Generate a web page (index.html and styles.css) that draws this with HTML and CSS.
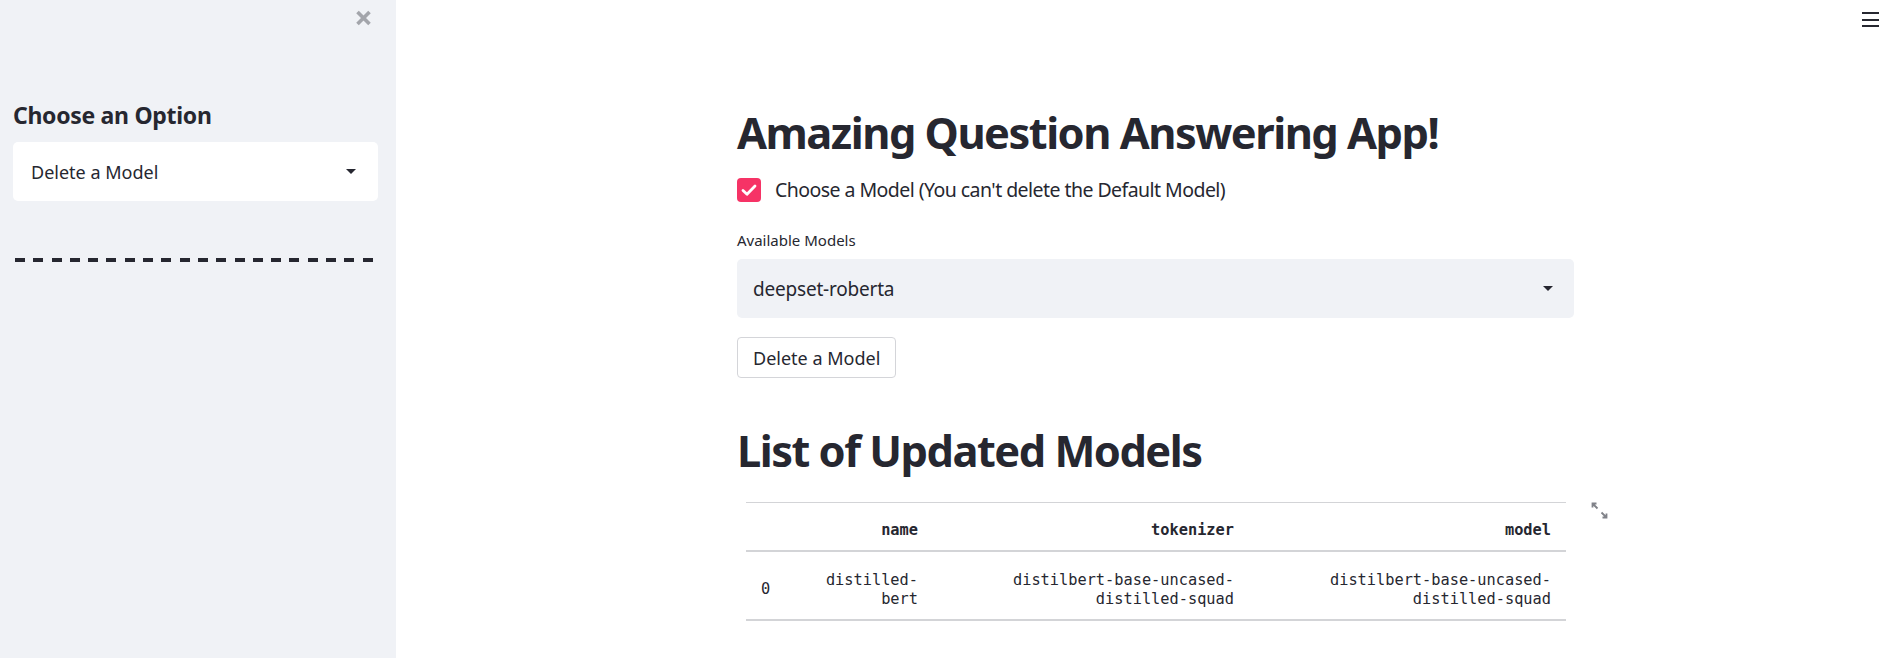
FILE: index.html
```html
<!DOCTYPE html>
<html lang="en">
<head>
<meta charset="utf-8">
<title>Amazing Question Answering App!</title>
<link rel="stylesheet" href="styles.css">
</head>
<body>
<aside class="sidebar">
  <div class="sb-top">
    <button class="close" aria-label="Close sidebar">
      <svg width="17" height="16" viewBox="0 0 17 16"><path d="M2.5 2 L14.5 14 M14.5 2 L2.5 14" stroke="#a3a5ab" stroke-width="3.6" stroke-linecap="butt"/></svg>
    </button>
  </div>
  <h3 class="sb-title">Choose an Option</h3>
  <div class="select sb-select">
    <span>Delete a Model</span>
    <svg class="caret" width="10" height="5" viewBox="0 0 10 5"><polygon points="0,0 10,0 5,5" fill="#262730"/></svg>
  </div>
  <div class="dashes"></div>
</aside>
<main class="main">
  <div class="topbar">
    <button class="menu" aria-label="Menu">
      <span></span><span></span><span></span>
    </button>
  </div>
  <div class="block">
    <h1 class="title">Amazing Question Answering App!</h1>
    <label class="checkbox">
      <span class="box"><svg width="24" height="24" viewBox="0 0 24 24"><path d="M6 12.5 L10 16.2 L18 8" fill="none" stroke="#fff" stroke-width="2.8" stroke-linecap="round" stroke-linejoin="round"/></svg></span>
      <span class="cb-label">Choose a Model (You can't delete the Default Model)</span>
    </label>
    <div class="field-label">Available Models</div>
    <div class="select main-select">
      <span>deepset-roberta</span>
      <svg class="caret" width="10" height="5" viewBox="0 0 10 5"><polygon points="0,0 10,0 5,5" fill="#262730"/></svg>
    </div>
    <button class="btn">Delete a Model</button>
    <h2 class="title">List of Updated Models</h2>
    <div class="table-wrap">
      <table class="df">
        <thead>
          <tr><th class="idx"></th><th class="c-name">name</th><th class="c-tok">tokenizer</th><th class="c-model">model</th></tr>
        </thead>
        <tbody>
          <tr><th class="idx">0</th><td>distilled-<br>bert</td><td>distilbert-base-uncased-<br>distilled-squad</td><td>distilbert-base-uncased-<br>distilled-squad</td></tr>
        </tbody>
      </table>
      <svg class="expand" width="17" height="17" viewBox="0 0 17 17"><g fill="none" stroke="#808289" stroke-width="1.8"><path d="M1.5 5.5 V1.5 H5.5 M1.5 1.5 L6.5 6.5"/><path d="M15.5 11.5 V15.5 H11.5 M15.5 15.5 L10.5 10.5"/></g></svg>
    </div>
  </div>
</main>
</body>
</html>
```
FILE: styles.css
```css
* { box-sizing: border-box; }
html, body { margin: 0; padding: 0; }
body {
  display: flex;
  min-height: 658px;
  height: 658px;
  overflow: hidden;
  font-family: "Noto Sans", sans-serif;
  color: #262730;
  background: #ffffff;
}
.sidebar {
  width: 396px;
  flex: none;
  background: #f0f2f6;
  padding: 0 18px 0 13px;
  display: flex;
  flex-direction: column;
}
.sb-top {
  height: 38px;
  display: flex;
  justify-content: flex-end;
  align-items: flex-start;
  padding-top: 10px;
  padding-right: 6px;
}
.close {
  border: 0;
  background: none;
  padding: 0;
  width: 17px;
  height: 16px;
  display: block;
}
.close svg { display: block; }
.sb-title {
  margin: 63px 0 0 0;
  font-size: 23px;
  line-height: 28px;
  font-weight: 700;
  letter-spacing: -0.3px;
}
.select {
  display: flex;
  align-items: center;
  justify-content: space-between;
  height: 59px;
  border-radius: 5px;
  font-size: 18px;
}
.sb-select {
  margin-top: 13px;
  width: 365px;
  background: #ffffff;
  padding: 0 22px 0 18px;
}
.caret { display: block; flex: none; }
.dashes {
  margin-top: 57px;
  margin-left: 2px;
  width: 358px;
  height: 4px;
  background: repeating-linear-gradient(to right, #262730 0 10px, transparent 10px 18.3px);
}
.main {
  flex: 1;
  display: flex;
  flex-direction: column;
}
.topbar {
  height: 38px;
  display: flex;
  justify-content: flex-end;
  padding: 12px 22px 0 0;
}
.menu {
  border: 0;
  background: none;
  padding: 0;
  width: 17px;
  height: 15px;
  display: flex;
  flex-direction: column;
  justify-content: space-between;
}
.menu span {
  display: block;
  height: 2px;
  width: 17px;
  background: #262730;
}
.block {
  width: 837px;
  margin-left: 341px;
  margin-top: 69px;
  display: flex;
  flex-direction: column;
  align-items: flex-start;
}
.title {
  margin: 0;
  font-size: 43.4px;
  line-height: 52px;
  font-weight: 700;
  letter-spacing: -1.5px;
}
.checkbox {
  margin-top: 19px;
  display: flex;
  align-items: center;
  gap: 14px;
  font-size: 19.5px;
  line-height: 24px;
  letter-spacing: -0.55px;
}
.box {
  width: 24px;
  height: 24px;
  border-radius: 4px;
  background: #f63366;
  display: block;
}
.box svg { display: block; }
.field-label {
  margin-top: 29px;
  font-size: 15px;
  line-height: 19px;
}
.main-select {
  margin-top: 9px;
  width: 837px;
  background: #f0f2f6;
  padding: 0 21px 0 16px;
  font-size: 19px;
  letter-spacing: -0.2px;
}
.btn {
  margin-top: 19px;
  height: 41px;
  padding: 0 15px;
  border: 1px solid #d4d5d9;
  border-radius: 4px;
  background: #ffffff;
  font-family: "Noto Sans", sans-serif;
  font-size: 18px;
  color: #262730;
}
h2.title { margin-top: 47px; }
.table-wrap {
  position: relative;
  margin-top: 25px;
  margin-left: 9px;
  width: 820px;
}
.df {
  width: 820px;
  border-collapse: collapse;
  font-family: "DejaVu Sans Mono", "Liberation Mono", monospace;
  font-size: 15.3px;
  color: #262730;
}
.df thead tr { border-top: 1px solid #d3d4d7; border-bottom: 2px solid #d3d4d7; }
.df tbody tr { border-bottom: 2px solid #d3d4d7; }
.df th, .df td {
  text-align: right;
  padding: 0 15px 0 0;
  vertical-align: middle;
  line-height: 19px;
}
.df thead th { height: 48px; font-weight: 700; padding-top: 8px; }
.df tbody td, .df tbody th { height: 69px; font-weight: 400; padding-top: 9px; }
.df th.idx { width: 50px; text-align: left; padding-left: 15px; font-weight: 400; }
.df .c-name { width: 137px; }
.df .c-tok { width: 316px; }
.df .c-model { width: 317px; }
.expand {
  position: absolute;
  top: 0;
  left: 845px;
  display: block;
}
```
